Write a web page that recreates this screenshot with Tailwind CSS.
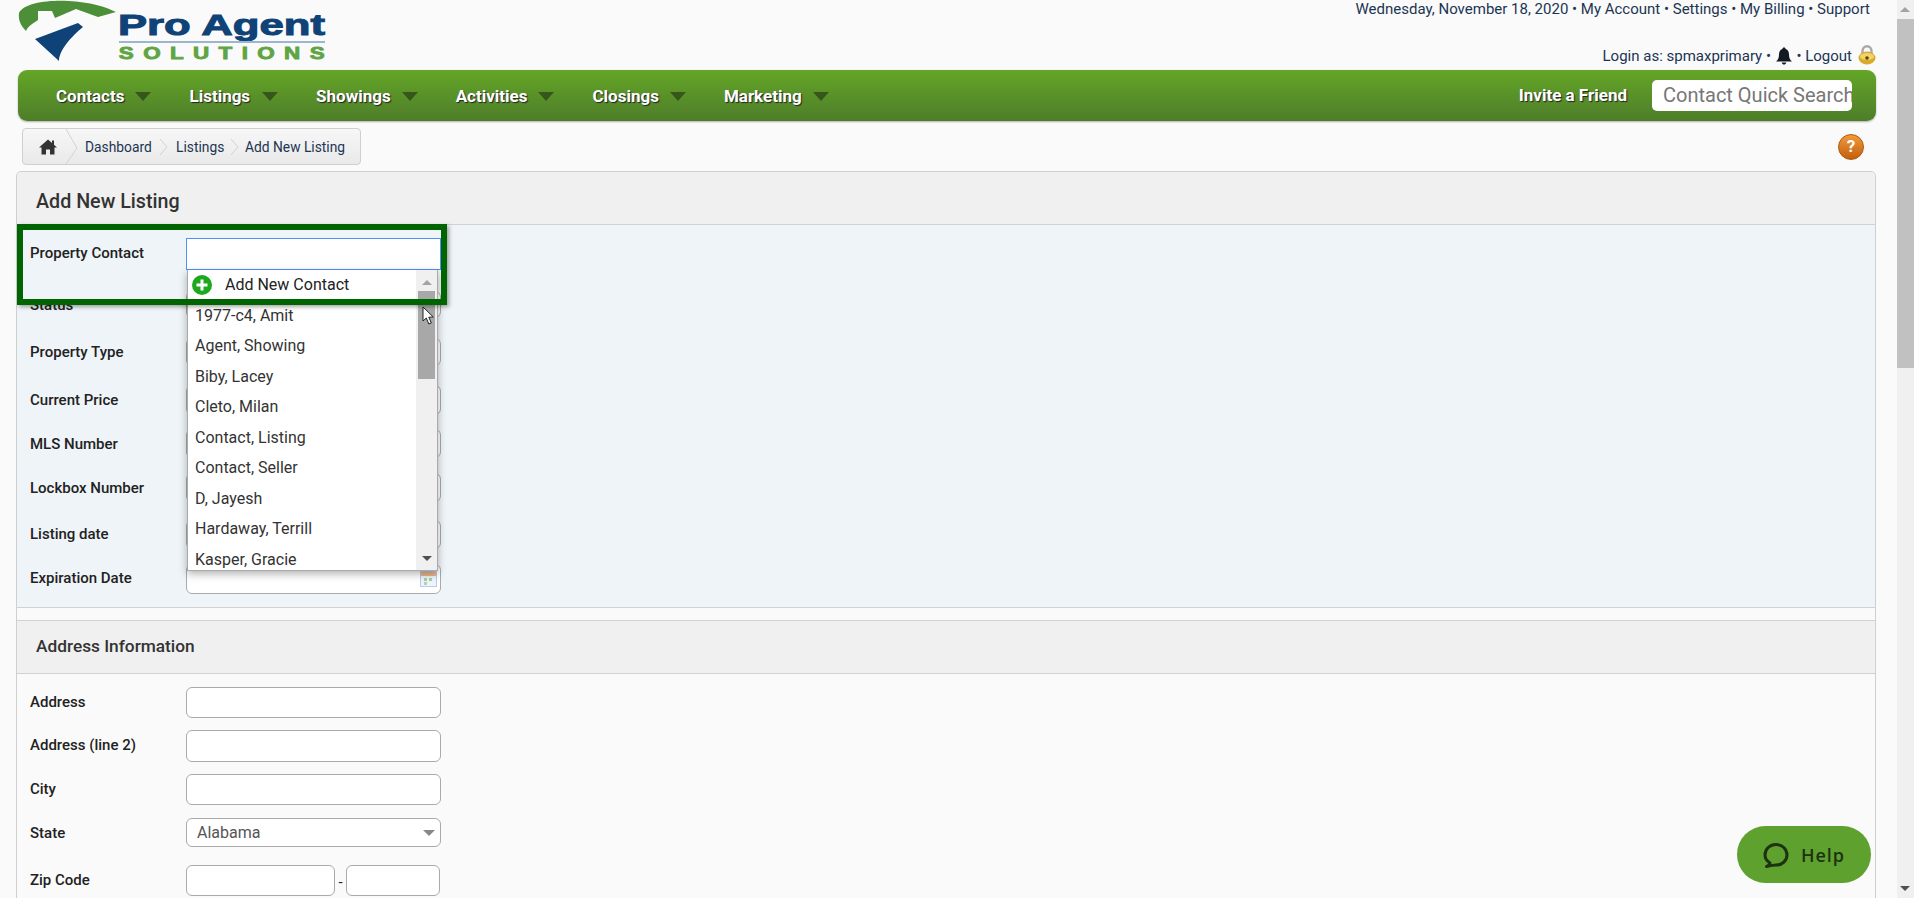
<!DOCTYPE html>
<html lang="en">

<head>
    <meta charset="UTF-8">
    <title>Add New Listing</title>
    <script src="https://cdn.jsdelivr.net/npm/@tailwindcss/browser@4"></script>
</head>

<body class="bg-[#fafafa] font-['Roboto',sans-serif] text-[15px] text-[#222] overflow-hidden">
    <div class="relative flex w-[1914px] h-[898px] overflow-hidden">

        <!-- page -->
        <div class="relative w-[1897px] h-[898px] overflow-hidden">

            <!-- top area -->
            <div class="flex justify-between h-[70px] pl-[18px] pr-[21px]">
                <svg width="310" height="62" viewBox="0 0 310 62" class="block">
                    <path d="M1 13 C6 3 30 0 50 1 C72 2 88 7 98 12 L80 17 L58 9 L37 18 L34 11 L20 11 L20 20 C14 24 10 26 8 31 C3 26 0 20 1 13 Z" fill="#4d8f38" />
                    <path d="M17 39 L60 23 L65 27 C54 36 41 50 41 61 Z" fill="#0f4377" />
                    <text x="100" y="35" font-family="Liberation Sans" font-weight="700" font-size="30" fill="#0f4377" textLength="207" lengthAdjust="spacingAndGlyphs" stroke="#0f4377" stroke-width="1">Pro Agent</text>
                    <rect x="101" y="41" width="206" height="2" fill="#9db6d0" />
                    <text transform="scale(1.4 1)" x="72" y="59" font-family="Liberation Sans" font-weight="700" font-size="16" fill="#5fa544" textLength="147" stroke="#5fa544" stroke-width="0.8">SOLUTIONS</text>
                </svg>
                <div class="flex flex-col items-end text-[#1c3553] leading-[18px]">
                    <div class="pr-[6px]">Wednesday, November 18, 2020 • My Account • Settings • My Billing • Support</div>
                    <div class="flex items-center mt-[29px] h-[18px]">
                        <span>Login as: spmaxprimary •&nbsp;</span>
                        <svg width="18" height="18" viewBox="0 0 18 18">
                            <path d="M9 0.5 C10 0.5 10.6 1.2 10.6 2 C13 2.8 14 5 14 7.5 C14 11 15 13 17 14.5 L1 14.5 C3 13 4 11 4 7.5 C4 5 5 2.8 7.4 2 C7.4 1.2 8 0.5 9 0.5 Z M6.8 15.5 L11.2 15.5 C11 17 10 17.6 9 17.6 C8 17.6 7 17 6.8 15.5 Z" fill="#141a22" />
                        </svg>
                        <span>&nbsp;• Logout</span>
                        <svg width="18" height="20" viewBox="0 0 18 20" class="ml-[6px] -mt-[3px]">
                            <path d="M4.5 9 V6 C4.5 3 6.5 1.2 9 1.2 C11.5 1.2 13.5 3 13.5 6 V9" fill="none" stroke="#a9a9a9" stroke-width="2.4" />
                            <ellipse cx="9" cy="13" rx="8.5" ry="6.5" fill="#d9ab2c" />
                            <ellipse cx="9" cy="11.5" rx="7" ry="3.6" fill="#f0d36b" />
                            <circle cx="9" cy="13" r="1.8" fill="#5c4410" />
                        </svg>
                    </div>
                </div>
            </div>

            <!-- main nav -->
            <div class="ml-[18px] w-[1858px] h-[51px] rounded-[9px] bg-gradient-to-b from-[#64a626] to-[#4e7d29] shadow-[0_1px_2px_rgba(0,0,0,0.3)] flex items-center justify-between pr-[24px] text-white font-bold text-[17px] [text-shadow:1px_1px_1px_#222]">
                <div class="flex items-center pl-[38px] pt-[2px]">
                    <span>Contacts</span><i class="ml-[11px] mr-[38px] w-0 h-0 border-x-[8px] border-x-transparent border-t-[9px] border-t-[#37561c]"></i>
                    <span>Listings</span><i class="ml-[12px] mr-[38px] w-0 h-0 border-x-[8px] border-x-transparent border-t-[9px] border-t-[#37561c]"></i>
                    <span>Showings</span><i class="ml-[11px] mr-[38px] w-0 h-0 border-x-[8px] border-x-transparent border-t-[9px] border-t-[#37561c]"></i>
                    <span>Activities</span><i class="ml-[11px] mr-[38px] w-0 h-0 border-x-[8px] border-x-transparent border-t-[9px] border-t-[#37561c]"></i>
                    <span>Closings</span><i class="ml-[11px] mr-[38px] w-0 h-0 border-x-[8px] border-x-transparent border-t-[9px] border-t-[#37561c]"></i>
                    <span>Marketing</span><i class="ml-[11px] w-0 h-0 border-x-[8px] border-x-transparent border-t-[9px] border-t-[#37561c]"></i>
                </div>
                <div class="flex items-center">
                    <span class="mr-[25px] pt-[1px]">Invite a Friend</span>
                    <div class="w-[200px] h-[31px] bg-white rounded-[5px] overflow-hidden pl-[11px] text-[20px] leading-[31px] font-normal text-[#777] whitespace-nowrap [text-shadow:none]">Contact Quick Search</div>
                </div>
            </div>

            <!-- breadcrumb row -->
            <div class="flex justify-between items-center h-[37px] mt-[7px] ml-[22px] mr-[33px]">
                <div class="relative flex items-center h-[37px] w-[339px] rounded-[4px] border border-[#cfcfcf] bg-gradient-to-b from-[#f7f7f7] to-[#e9e9e9] text-[#1c3553] text-[13.8px]">
                    <svg width="18" height="16" viewBox="0 0 18 16" class="absolute left-[16px] top-[10px]">
                        <path d="M9 0.5 L13 4 V1.5 H15 V5.8 L18 8.5 H15.5 V15.5 H11 V10.5 H7 V15.5 H2.5 V8.5 H0 Z" fill="#333" />
                    </svg>
                    <svg width="14" height="35" viewBox="0 0 14 35" class="absolute left-[42px] top-0">
                        <path d="M1 0 L12 19 L1 35" fill="none" stroke="#d2d2d2" />
                    </svg>
                    <span class="absolute left-[62px] top-[8px]">Dashboard</span>
                    <svg width="10" height="18" viewBox="0 0 10 18" class="absolute left-[136px] top-[9px]">
                        <path d="M1 1 L8 9 L1 17" fill="none" stroke="#d2d2d2" />
                    </svg>
                    <span class="absolute left-[153px] top-[8px]">Listings</span>
                    <svg width="10" height="18" viewBox="0 0 10 18" class="absolute left-[207px] top-[9px]">
                        <path d="M1 1 L8 9 L1 17" fill="none" stroke="#d2d2d2" />
                    </svg>
                    <span class="absolute left-[222px] top-[8px]">Add New Listing</span>
                </div>
                <div class="w-[26px] h-[26px] rounded-full bg-gradient-to-b from-[#f29a3a] to-[#c35f0b] border border-[#a8590f] flex items-center justify-center text-white text-[17px] font-bold">?</div>
            </div>

            <!-- listing panel -->
            <div class="mt-[6px] ml-[16px] w-[1860px] h-[760px] border border-[#cfcfcf] rounded-t-[5px]">
                <div class="h-[53px] bg-[#f0f0f0] border-b border-[#d2d2d2] rounded-t-[5px] pl-[19px] pt-[20px] text-[19.7px] leading-[20px] font-medium text-[#333]">Add New Listing</div>

                <div class="h-[383px] bg-[#eff4f8] border-b border-[#d2d2d2] pl-[13px] pt-[13px]">
                    <div class="flex h-[32px]"><label class="w-[156px] pt-[4px] font-medium">Property Contact</label><div class="w-[255px] h-[32px] bg-white border border-[#4d90fe]"></div></div>
                    <div class="flex h-[27px] mt-[21px]"><label class="w-[156px] pt-[3px] font-medium">Status</label><div class="w-[255px] h-[27px] bg-white border border-[#aaa] rounded-[6px]"></div></div>
                    <div class="flex h-[28px] mt-[20px]"><label class="w-[156px] pt-[3px] font-medium">Property Type</label><div class="w-[255px] h-[28px] bg-white border border-[#aaa] rounded-[6px]"></div></div>
                    <div class="flex h-[30px] mt-[19px]"><label class="w-[156px] pt-[4px] font-medium">Current Price</label><div class="w-[255px] h-[30px] bg-white border border-[#aaa] rounded-[6px]"></div></div>
                    <div class="flex h-[29px] mt-[14px]"><label class="w-[156px] pt-[4px] font-medium">MLS Number</label><div class="w-[255px] h-[29px] bg-white border border-[#aaa] rounded-[6px]"></div></div>
                    <div class="flex h-[29px] mt-[15px]"><label class="w-[156px] pt-[4px] font-medium">Lockbox Number</label><div class="w-[255px] h-[29px] bg-white border border-[#aaa] rounded-[6px]"></div></div>
                    <div class="flex h-[29px] mt-[18px]"><label class="w-[156px] pt-[3px] font-medium">Listing date</label><div class="w-[255px] h-[29px] bg-white border border-[#aaa] rounded-[6px]"></div></div>
                    <div class="flex h-[30px] mt-[15px]"><label class="w-[156px] pt-[3px] font-medium">Expiration Date</label>
                        <div class="relative w-[255px] h-[30px] bg-white border border-[#aaa] rounded-[6px]">
                            <svg width="17" height="16" viewBox="0 0 17 16" class="absolute right-[3px] top-[6px]">
                                <rect x="0.5" y="0.5" width="16" height="15" fill="#eef4fb" stroke="#b5cde8" />
                                <rect x="1" y="1" width="15" height="4" fill="#eeb48a" />
                                <rect x="4" y="7" width="3" height="3" fill="#a6d29a" />
                                <rect x="9" y="7" width="3" height="3" fill="#a6d29a" />
                                <rect x="4" y="11" width="3" height="3" fill="#c5c5c5" />
                            </svg>
                        </div>
                    </div>
                </div>

                <div class="h-[12px]"></div>

                <div class="h-[54px] bg-[#f0f0f0] border-y border-[#d2d2d2] pl-[19px] pt-[15px] text-[17.3px] leading-[20px] font-medium text-[#333]">Address Information</div>

                <div class="pl-[13px] pt-[13px]">
                    <div class="flex h-[31px]"><label class="w-[156px] pt-[4px] font-medium">Address</label><div class="w-[255px] h-[31px] bg-white border border-[#aaa] rounded-[6px]"></div></div>
                    <div class="flex h-[32px] mt-[12px]"><label class="w-[156px] pt-[4px] font-medium">Address (line 2)</label><div class="w-[255px] h-[32px] bg-white border border-[#aaa] rounded-[6px]"></div></div>
                    <div class="flex h-[31px] mt-[12px]"><label class="w-[156px] pt-[4px] font-medium">City</label><div class="w-[255px] h-[31px] bg-white border border-[#aaa] rounded-[6px]"></div></div>
                    <div class="flex h-[29px] mt-[13px]"><label class="w-[156px] pt-[4px] font-medium">State</label>
                        <div class="flex items-center justify-between w-[255px] h-[29px] bg-white border border-[#aaa] rounded-[6px] pl-[10px] pr-[4px] text-[16px] text-[#555]"><span class="pt-[1px]">Alabama</span><i class="mr-[1px] mt-[1px] w-0 h-0 border-x-[6px] border-x-transparent border-t-[6px] border-t-[#888]"></i></div>
                    </div>
                    <div class="flex h-[31px] mt-[18px]"><label class="w-[156px] pt-[4px] font-medium">Zip Code</label>
                        <div class="w-[149px] h-[31px] bg-white border border-[#aaa] rounded-[6px]"></div>
                        <span class="w-[11px] text-center pt-[6px]">-</span>
                        <div class="w-[94px] h-[31px] bg-white border border-[#aaa] rounded-[6px]"></div>
                    </div>
                </div>
            </div>

            <!-- contact dropdown -->
            <div class="absolute left-[187px] top-[270px] w-[251px] h-[301px] bg-white border-x border-b border-[#aaa] shadow-[0_3px_8px_rgba(0,0,0,0.3)] text-[16px] text-[#333] overflow-hidden">
                <div class="flex flex-col pr-[21px]">
                    <div class="flex items-center h-[29px] pl-[4px] text-[#222]">
                        <svg width="20" height="20" viewBox="0 0 20 20" class="mr-[13px] shrink-0">
                            <circle cx="10" cy="10" r="10" fill="#1ea81e" />
                            <path d="M10 4.5 V15.5 M4.5 10 H15.5" stroke="#fff" stroke-width="3" />
                        </svg>
                        Add New Contact
                    </div>
                    <div class="flex items-center h-[31px] mt-[1px] pl-[7px]">1977-c4, Amit</div>
                    <div class="flex items-center h-[30px] pl-[7px]">Agent, Showing</div>
                    <div class="flex items-center h-[31px] pl-[7px]">Biby, Lacey</div>
                    <div class="flex items-center h-[30px] pl-[7px]">Cleto, Milan</div>
                    <div class="flex items-center h-[31px] pl-[7px]">Contact, Listing</div>
                    <div class="flex items-center h-[30px] pl-[7px]">Contact, Seller</div>
                    <div class="flex items-center h-[31px] pl-[7px]">D, Jayesh</div>
                    <div class="flex items-center h-[30px] pl-[7px]">Hardaway, Terrill</div>
                    <div class="flex items-center h-[31px] pl-[7px]">Kasper, Gracie</div>
                </div>
                <div class="absolute right-0 top-0 w-[21px] h-[300px] bg-[#f0f0f0]">
                    <i class="absolute left-[6px] top-[10px] w-0 h-0 border-x-[5px] border-x-transparent border-b-[5px] border-b-[#a3a3a3]"></i>
                    <div class="absolute left-[2px] top-[21px] w-[17px] h-[88px] bg-[#a8a8a8]"></div>
                    <i class="absolute left-[6px] bottom-[9px] w-0 h-0 border-x-[5px] border-x-transparent border-t-[5px] border-t-[#505050]"></i>
                </div>
            </div>

            <!-- mouse cursor -->
            <svg width="13" height="20" viewBox="0 0 13 20" class="absolute left-[422px] top-[306px]">
                <path d="M1 1 V15 L4.3 12 L6.8 18 L9.3 17 L6.8 11.2 L11.3 11 Z" fill="#fff" stroke="#222" stroke-width="1" />
            </svg>

            <!-- green highlight -->
            <div class="absolute left-[17px] top-[224px] w-[430px] h-[81px] border-[6px] border-[#006400] shadow-[2px_2px_4px_rgba(0,0,0,0.35)]"></div>

            <!-- help button -->
            <div class="absolute left-[1737px] top-[826px] w-[134px] h-[57px] rounded-full bg-[#5fa12f] flex items-center justify-center gap-[12px] font-['Open_Sans',sans-serif] text-[18px] font-semibold tracking-[1px] text-[#1d3210]">
                <svg width="26" height="26" viewBox="0 0 26 26">
                    <path d="M7 21 C3.8 19 2 16.2 2 13 C2 7 6.8 2.5 13 2.5 C19 2.5 24 7 24 13 C24 19 19 23 13 23 C11 23 9 23.3 3.5 24.5 C5.5 23.5 6.5 22.5 7 21 Z" fill="none" stroke="#1d3210" stroke-width="3" stroke-linejoin="round" />
                </svg>
                <span class="pt-[1px]">Help</span>
            </div>
        </div>

        <!-- window scrollbar -->
        <div class="relative w-[17px] h-[898px] bg-[#f0f0f0]">
            <i class="absolute left-[3px] top-[7px] w-0 h-0 border-x-[5px] border-x-transparent border-b-[5px] border-b-[#a3a3a3]"></i>
            <div class="absolute left-0 top-[19px] w-[17px] h-[349px] bg-[#c1c1c1]"></div>
            <i class="absolute left-[3px] bottom-[7px] w-0 h-0 border-x-[5px] border-x-transparent border-t-[5px] border-t-[#505050]"></i>
        </div>
    </div>
</body>

</html>
